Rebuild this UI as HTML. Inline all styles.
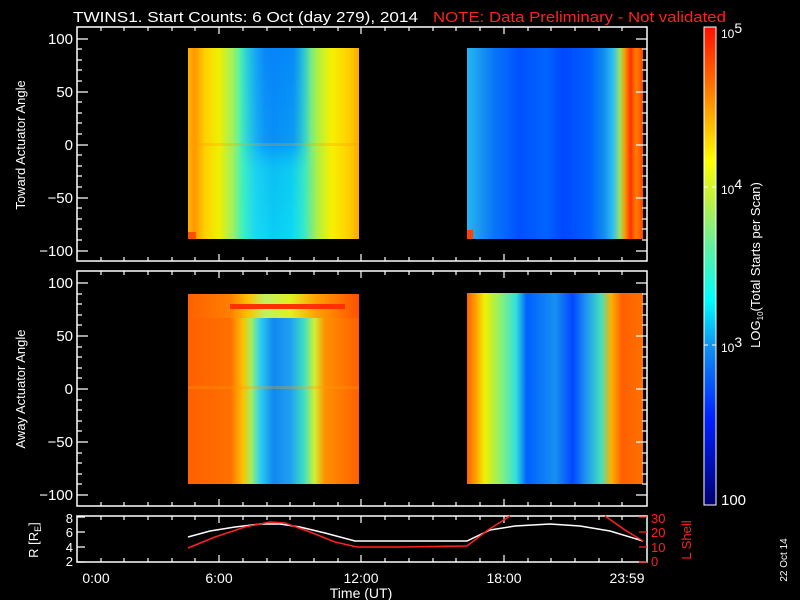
<!DOCTYPE html>
<html><head><meta charset="utf-8"><style>
html,body{margin:0;padding:0;background:#000;}
svg{display:block;font-family:"Liberation Sans",sans-serif;}
</style></head><body>
<svg width="800" height="600" viewBox="0 0 800 600" xmlns="http://www.w3.org/2000/svg">
<defs>
<linearGradient id="t1" x1="0" x2="1" y1="0" y2="0">
<stop offset="0" stop-color="#ffb000"/><stop offset="0.04" stop-color="#ff9800"/><stop offset="0.1" stop-color="#ffd000"/><stop offset="0.18" stop-color="#f0f000"/><stop offset="0.26" stop-color="#a0f060"/><stop offset="0.32" stop-color="#40f0c0"/><stop offset="0.4" stop-color="#20d0f0"/><stop offset="0.5" stop-color="#10b8f0"/><stop offset="0.6" stop-color="#10c8f0"/><stop offset="0.68" stop-color="#40e8c0"/><stop offset="0.76" stop-color="#b0f040"/><stop offset="0.84" stop-color="#f8f000"/><stop offset="0.94" stop-color="#ffd000"/><stop offset="1" stop-color="#ffa800"/>
</linearGradient>
<linearGradient id="t2" x1="0" x2="1" y1="0" y2="0">
<stop offset="0" stop-color="#20b8f0"/><stop offset="0.05" stop-color="#20a0f0"/><stop offset="0.15" stop-color="#0878f8"/><stop offset="0.3" stop-color="#0050ff"/><stop offset="0.45" stop-color="#0064ff"/><stop offset="0.55" stop-color="#0048ff"/><stop offset="0.7" stop-color="#0060ff"/><stop offset="0.78" stop-color="#1090f0"/><stop offset="0.83" stop-color="#30c0f0"/><stop offset="0.87" stop-color="#a0e060"/><stop offset="0.9" stop-color="#ff9000"/><stop offset="0.93" stop-color="#ff3000"/><stop offset="0.96" stop-color="#ff8000"/><stop offset="1" stop-color="#ff4000"/>
</linearGradient>
<linearGradient id="b1" x1="0" x2="1" y1="0" y2="0">
<stop offset="0" stop-color="#ff6000"/><stop offset="0.25" stop-color="#ff7000"/><stop offset="0.32" stop-color="#ffc000"/><stop offset="0.37" stop-color="#a0f060"/><stop offset="0.42" stop-color="#30d0f0"/><stop offset="0.5" stop-color="#1088f0"/><stop offset="0.6" stop-color="#20a0f0"/><stop offset="0.68" stop-color="#40e0c0"/><stop offset="0.74" stop-color="#d0f030"/><stop offset="0.8" stop-color="#ff9000"/><stop offset="1" stop-color="#ff6000"/>
</linearGradient>
<linearGradient id="band" x1="0" x2="1" y1="0" y2="0">
<stop offset="0" stop-color="#ff6000"/><stop offset="0.25" stop-color="#ff8000"/><stop offset="0.35" stop-color="#ffc000"/><stop offset="0.45" stop-color="#c0f060"/><stop offset="0.6" stop-color="#e0f020"/><stop offset="0.75" stop-color="#ffa000"/><stop offset="1" stop-color="#ff5000"/>
</linearGradient>
<linearGradient id="b2" x1="0" x2="1" y1="0" y2="0">
<stop offset="0" stop-color="#ff6000"/><stop offset="0.05" stop-color="#ffa000"/><stop offset="0.1" stop-color="#f0f000"/><stop offset="0.2" stop-color="#80f080"/><stop offset="0.28" stop-color="#30e0e0"/><stop offset="0.34" stop-color="#0060ff"/><stop offset="0.5" stop-color="#1890f0"/><stop offset="0.6" stop-color="#0048ff"/><stop offset="0.68" stop-color="#2098f0"/><stop offset="0.76" stop-color="#40e0c0"/><stop offset="0.82" stop-color="#ffb000"/><stop offset="0.88" stop-color="#ff6000"/><stop offset="1" stop-color="#ff7000"/>
</linearGradient>
<linearGradient id="cb" x1="0" x2="0" y1="0" y2="1">
<stop offset="0" stop-color="#ff1000"/><stop offset="0.12" stop-color="#ff7000"/><stop offset="0.28" stop-color="#ffff00"/><stop offset="0.36" stop-color="#c0f040"/><stop offset="0.46" stop-color="#60f0a0"/><stop offset="0.57" stop-color="#00ffff"/><stop offset="0.67" stop-color="#1090f0"/><stop offset="0.82" stop-color="#0020ff"/><stop offset="1" stop-color="#000070"/>
</linearGradient>
<linearGradient id="shadeV" x1="0" x2="0" y1="0" y2="1">
<stop offset="0" stop-color="#0060ff" stop-opacity="0.6"/><stop offset="0.5" stop-color="#0060ff" stop-opacity="0.45"/><stop offset="0.65" stop-color="#00e0ff" stop-opacity="0.2"/><stop offset="1" stop-color="#00ffff" stop-opacity="0.3"/>
</linearGradient>
<linearGradient id="hm" x1="0" x2="1" y1="0" y2="0">
<stop offset="0" stop-color="#000"/><stop offset="0.3" stop-color="#000"/><stop offset="0.45" stop-color="#fff"/><stop offset="0.62" stop-color="#fff"/><stop offset="0.72" stop-color="#000"/><stop offset="1" stop-color="#000"/>
</linearGradient>
<mask id="m1"><rect x="188" y="48" width="171" height="191" fill="url(#hm)"/></mask>
</defs>

<text x="73" y="22" fill="#fff" font-size="15" textLength="345" lengthAdjust="spacingAndGlyphs">TWINS1. Start Counts:  6 Oct (day 279), 2014</text>
<text x="433" y="22" fill="#ff2020" font-size="15" textLength="293" lengthAdjust="spacingAndGlyphs">NOTE: Data Preliminary - Not validated</text>

<rect x="188" y="48" width="171" height="191" fill="url(#t1)"/>
<rect x="188" y="48" width="171" height="191" fill="url(#shadeV)" mask="url(#m1)"/>
<rect x="467" y="48" width="176" height="191" fill="url(#t2)"/>
<rect x="188" y="143" width="171" height="3" fill="#ffa000" opacity="0.3"/>
<rect x="188" y="232" width="8" height="7" fill="#ff5000"/>
<rect x="467" y="230" width="6" height="9" fill="#ff4000"/>

<rect x="188" y="294" width="171" height="190" fill="url(#b1)"/>
<rect x="188" y="294" width="171" height="24" fill="url(#band)"/>
<rect x="230" y="304" width="115" height="5" fill="#ff3000"/>
<rect x="467" y="293" width="176" height="191" fill="url(#b2)"/>
<rect x="188" y="386" width="171" height="3" fill="#ffa000" opacity="0.3"/>

<g fill="none" stroke="#fff" stroke-width="1.5">
<rect x="77" y="27" width="570" height="234"/>
<rect x="77" y="271" width="570" height="235"/>
<rect x="77" y="516" width="570" height="46"/>
</g>

<g stroke="#fff" stroke-width="1.2">
<path d="M77 39h11M77 92h11M77 145h11M77 198h11M77 251h11M636 39h11M636 92h11M636 145h11M636 198h11M636 251h11"/>
<path d="M77 49h5M77 60h5M77 70h5M77 81h5M77 102h5M77 113h5M77 123h5M77 134h5M77 155h5M77 166h5M77 176h5M77 187h5M77 208h5M77 219h5M77 229h5M77 240h5"/>
<path d="M642 49h5M642 60h5M642 70h5M642 81h5M642 102h5M642 113h5M642 123h5M642 134h5M642 155h5M642 166h5M642 176h5M642 187h5M642 208h5M642 219h5M642 229h5M642 240h5"/>
<path d="M77 283h11M77 336h11M77 389h11M77 442h11M77 495h11M636 283h11M636 336h11M636 389h11M636 442h11M636 495h11"/>
<path d="M77 294h5M77 304h5M77 315h5M77 325h5M77 347h5M77 357h5M77 368h5M77 378h5M77 400h5M77 410h5M77 421h5M77 431h5M77 453h5M77 463h5M77 474h5M77 484h5"/>
<path d="M642 294h5M642 304h5M642 315h5M642 325h5M642 347h5M642 357h5M642 368h5M642 378h5M642 400h5M642 410h5M642 421h5M642 431h5M642 453h5M642 463h5M642 474h5M642 484h5"/>
<path d="M219 27v7M361 27v7M504 27v7M219 261v-7M361 261v-7M504 261v-7M219 271v7M361 271v7M504 271v7M219 506v-7M361 506v-7M504 506v-7M219 516v7M361 516v7M504 516v7M219 562v-7M361 562v-7M504 562v-7"/>
<path d="M101 27v4M124 27v4M148 27v4M172 27v4M195 27v4M243 27v4M267 27v4M290 27v4M314 27v4M338 27v4M385 27v4M409 27v4M433 27v4M456 27v4M480 27v4M528 27v4M551 27v4M575 27v4M599 27v4M622 27v4"/>
<path d="M101 261v-4M124 261v-4M148 261v-4M172 261v-4M195 261v-4M243 261v-4M267 261v-4M290 261v-4M314 261v-4M338 261v-4M385 261v-4M409 261v-4M433 261v-4M456 261v-4M480 261v-4M528 261v-4M551 261v-4M575 261v-4M599 261v-4M622 261v-4"/>
<path d="M101 271v4M124 271v4M148 271v4M172 271v4M195 271v4M243 271v4M267 271v4M290 271v4M314 271v4M338 271v4M385 271v4M409 271v4M433 271v4M456 271v4M480 271v4M528 271v4M551 271v4M575 271v4M599 271v4M622 271v4"/>
<path d="M101 506v-4M124 506v-4M148 506v-4M172 506v-4M195 506v-4M243 506v-4M267 506v-4M290 506v-4M314 506v-4M338 506v-4M385 506v-4M409 506v-4M433 506v-4M456 506v-4M480 506v-4M528 506v-4M551 506v-4M575 506v-4M599 506v-4M622 506v-4"/>
<path d="M101 516v4M124 516v4M148 516v4M172 516v4M195 516v4M243 516v4M267 516v4M290 516v4M314 516v4M338 516v4M385 516v4M409 516v4M433 516v4M456 516v4M480 516v4M528 516v4M551 516v4M575 516v4M599 516v4M622 516v4"/>
<path d="M101 562v-4M124 562v-4M148 562v-4M172 562v-4M195 562v-4M243 562v-4M267 562v-4M290 562v-4M314 562v-4M338 562v-4M385 562v-4M409 562v-4M433 562v-4M456 562v-4M480 562v-4M528 562v-4M551 562v-4M575 562v-4M599 562v-4M622 562v-4"/>
<path d="M77 517h8M77 532h8M77 547h8M77 562h8"/>
</g>
<g stroke="#ff2020" stroke-width="1.2"><path d="M647 517h-8M647 532h-8M647 547h-8M647 562h-8"/></g>

<g fill="#fff" font-size="15" text-anchor="end">
<text x="73" y="44">100</text><text x="73" y="97">50</text><text x="73" y="150">0</text><text x="73" y="203">−50</text><text x="73" y="256">−100</text>
<text x="73" y="288">100</text><text x="73" y="341">50</text><text x="73" y="394">0</text><text x="73" y="447">−50</text><text x="73" y="500">−100</text>
<text x="73" y="523" font-size="13">8</text><text x="73" y="537" font-size="13">6</text><text x="73" y="552" font-size="13">4</text><text x="73" y="566" font-size="13">2</text>
</g>
<g fill="#ff2020" font-size="13">
<text x="651" y="523">30</text><text x="651" y="537">20</text><text x="651" y="552">10</text><text x="651" y="566">0</text>
</g>
<text transform="translate(25,145) rotate(-90)" fill="#fff" font-size="13" text-anchor="middle">Toward Actuator Angle</text>
<text transform="translate(25,389) rotate(-90)" fill="#fff" font-size="13" text-anchor="middle">Away Actuator Angle</text>
<text transform="translate(38,540) rotate(-90)" fill="#fff" font-size="13" text-anchor="middle">R [R<tspan font-size="9" dy="3">E</tspan><tspan dy="-3">]</tspan></text>
<text transform="translate(691,540) rotate(-90)" fill="#ff2020" font-size="13" text-anchor="middle">L Shell</text>

<g fill="#fff" font-size="14" text-anchor="middle">
<text x="96" y="583">0:00</text><text x="219" y="583">6:00</text><text x="361" y="583">12:00</text><text x="504" y="583">18:00</text><text x="627" y="583">23:59</text>
<text x="361" y="598">Time (UT)</text>
</g>

<polyline fill="none" stroke="#fff" stroke-width="1.5" points="188,537 210,531 235,527 260,524 280,524 300,527 325,533 355,541 467,541 490,530 515,526 550,524 580,526 610,531 643,541"/>
<polyline fill="none" stroke="#ff2020" stroke-width="1.5" points="188,548 215,537 245,527 270,522 285,523 310,532 335,542 357,547 400,547 467,546 488,530 510,516"/>
<polyline fill="none" stroke="#ff2020" stroke-width="1.5" points="605,516 625,530 643,541"/>

<rect x="704" y="27" width="12" height="478" fill="url(#cb)" stroke="#fff" stroke-width="1"/>
<path d="M704 187h4M712 187h4M704 345h4M712 345h4" stroke="#fff"/>
<g fill="#fff" font-size="12">
<text x="721" y="38">10<tspan font-size="14" dy="-5">5</tspan></text>
<text x="721" y="194">10<tspan font-size="14" dy="-5">4</tspan></text>
<text x="721" y="352">10<tspan font-size="14" dy="-5">3</tspan></text>
<text x="721" y="505" font-size="15">100</text>
</g>
<text transform="translate(760,265) rotate(-90)" fill="#fff" font-size="13" text-anchor="middle">LOG<tspan font-size="8" dy="3">10</tspan><tspan dy="-3">(Total Starts per Scan)</tspan></text>
<text transform="translate(787,560) rotate(-90)" fill="#fff" font-size="10" text-anchor="middle">22 Oct 14</text>
</svg>
</body></html>
